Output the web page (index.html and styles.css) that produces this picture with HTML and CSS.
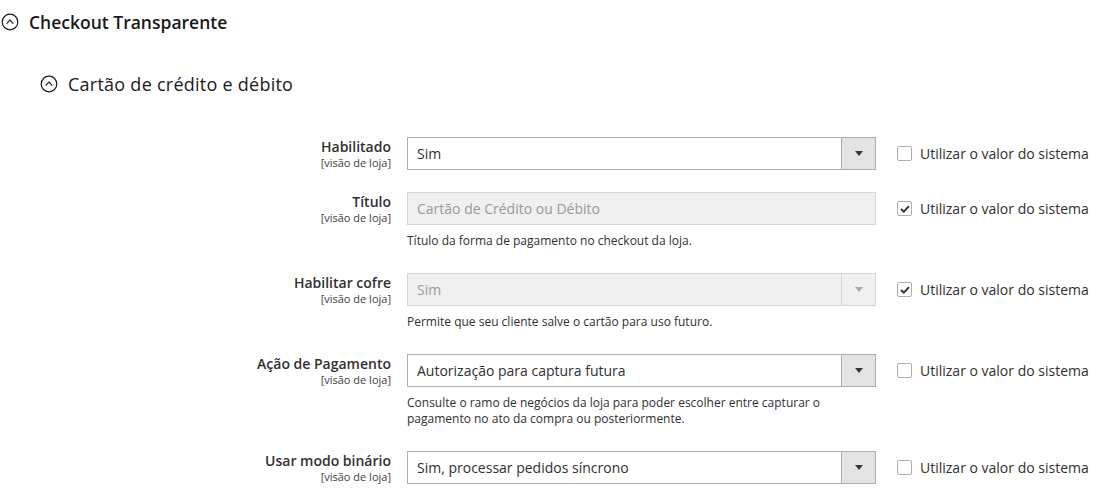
FILE: index.html
```html
<!DOCTYPE html>
<html lang="pt-BR">
<head>
<meta charset="utf-8">
<title>Checkout Transparente</title>
<link rel="stylesheet" href="styles.css">
</head>
<body>
<div class="page">
  <h2 class="section-title">
    <svg class="toggle" width="18" height="18" viewBox="0 0 18 18"><circle cx="9" cy="9" r="7.8" fill="none" stroke="#1a1a1a" stroke-width="1.2"/><polyline points="5.6,10.6 9,7.2 12.4,10.6" fill="none" stroke="#1a1a1a" stroke-width="1.2"/></svg>
    <span>Checkout Transparente</span>
  </h2>
  <div class="group">
    <h3 class="group-title">
      <svg class="toggle" width="18" height="18" viewBox="0 0 18 18"><circle cx="9" cy="9" r="7.8" fill="none" stroke="#1a1a1a" stroke-width="1.2"/><polyline points="5.6,10.6 9,7.2 12.4,10.6" fill="none" stroke="#1a1a1a" stroke-width="1.2"/></svg>
      <span>Cartão de crédito e débito</span>
    </h3>

    <div class="rows">
      <div class="row">
        <div class="label"><span class="name">Habilitado</span><span class="scope">[visão de loja]</span></div>
        <div class="value">
          <div class="select"><span class="sel-text">Sim</span><span class="sel-btn"><span class="arrow"></span></span></div>
        </div>
        <div class="inherit"><span class="cb"></span><span>Utilizar o valor do sistema</span></div>
      </div>

      <div class="row">
        <div class="label"><span class="name">Título</span><span class="scope">[visão de loja]</span></div>
        <div class="value">
          <div class="input disabled">Cartão de Crédito ou Débito</div>
          <p class="note">Título da forma de pagamento no checkout da loja.</p>
        </div>
        <div class="inherit"><span class="cb checked"><svg width="10" height="8" viewBox="0 0 10 8"><polyline points="1,4 3.8,6.6 9,1.2" fill="none" stroke="#333" stroke-width="1.9"/></svg></span><span>Utilizar o valor do sistema</span></div>
      </div>

      <div class="row">
        <div class="label"><span class="name">Habilitar cofre</span><span class="scope">[visão de loja]</span></div>
        <div class="value">
          <div class="select disabled"><span class="sel-text">Sim</span><span class="sel-btn"><span class="arrow"></span></span></div>
          <p class="note">Permite que seu cliente salve o cartão para uso futuro.</p>
        </div>
        <div class="inherit"><span class="cb checked"><svg width="10" height="8" viewBox="0 0 10 8"><polyline points="1,4 3.8,6.6 9,1.2" fill="none" stroke="#333" stroke-width="1.9"/></svg></span><span>Utilizar o valor do sistema</span></div>
      </div>

      <div class="row">
        <div class="label"><span class="name">Ação de Pagamento</span><span class="scope">[visão de loja]</span></div>
        <div class="value">
          <div class="select"><span class="sel-text">Autorização para captura futura</span><span class="sel-btn"><span class="arrow"></span></span></div>
          <p class="note">Consulte o ramo de negócios da loja para poder escolher entre capturar o pagamento no ato da compra ou posteriormente.</p>
        </div>
        <div class="inherit"><span class="cb"></span><span>Utilizar o valor do sistema</span></div>
      </div>

      <div class="row">
        <div class="label"><span class="name">Usar modo binário</span><span class="scope">[visão de loja]</span></div>
        <div class="value">
          <div class="select"><span class="sel-text">Sim, processar pedidos síncrono</span><span class="sel-btn"><span class="arrow"></span></span></div>
        </div>
        <div class="inherit"><span class="cb"></span><span>Utilizar o valor do sistema</span></div>
      </div>
    </div>
  </div>
</div>
</body>
</html>
```

FILE: styles.css
```css
* { box-sizing: border-box; }
html, body { margin: 0; padding: 0; background: #fff; }
body {
  font-family: "Open Sans", "Noto Sans", sans-serif;
  color: #303030;
  font-size: 14px;
}
.page { padding: 10px 0 0 1px; }
.section-title, .group-title {
  display: flex;
  align-items: center;
  gap: 10px;
  margin: 0;
  line-height: 24px;
  color: #1a1a1a;
}
.section-title { font-weight: 600; font-size: 17.5px; }
.group { padding-left: 39px; }
.group-title {
  font-weight: 400;
  font-size: 18px;
  letter-spacing: 0.25px;
  margin-top: 38px;
  margin-bottom: 41px;
}
.group-title span { font-weight: 500; }
.toggle { flex: none; }

.rows { display: flex; flex-direction: column; gap: 22px; }
.row {
  display: grid;
  grid-template-columns: 351px 469px auto;
  column-gap: 16px;
  align-items: start;
}
.label {
  display: flex;
  flex-direction: column;
  align-items: flex-end;
  text-align: right;
  padding-top: 1px;
}
.name { font-weight: 600; font-size: 14px; line-height: 18px; color: #303030; }
.scope { font-size: 11px; line-height: 13px; color: #404040; }

.select, .input {
  height: 33px;
  border: 1px solid #adadad;
  background: #fff;
  display: flex;
  align-items: center;
  font-size: 14px;
  color: #303030;
}
.sel-text { flex: 1; padding-left: 9px; }
.input { padding-left: 9px; }
.sel-btn {
  width: 34px;
  align-self: stretch;
  background: #e3e3e3;
  border-left: 1px solid #adadad;
  display: flex;
  align-items: center;
  justify-content: center;
}
.arrow {
  width: 0; height: 0;
  border-left: 4.5px solid transparent;
  border-right: 4.5px solid transparent;
  border-top: 5px solid #41362f;
  margin-left: 1px;
}
.disabled { background: #f0f0f0; border-color: #d6d6d6; color: #999; }
.select.disabled .sel-btn { background: #f0f0f0; border-left-color: #d6d6d6; }
.select.disabled .arrow { border-top-color: #aaa; }

.note {
  margin: 8px 0 0;
  padding-bottom: 2px;
  font-size: 12px;
  line-height: 16px;
  color: #303030;
  max-width: 420px;
}
.inherit {
  height: 33px;
  display: flex;
  align-items: center;
  gap: 8px;
  margin-left: 5px;
  font-size: 14px;
  color: #303030;
}
.cb {
  width: 15px; height: 15px;
  border: 1px solid #adadad;
  border-radius: 2px;
  background: #fff;
  display: flex;
  align-items: center;
  justify-content: center;
  flex: none;
}
```
